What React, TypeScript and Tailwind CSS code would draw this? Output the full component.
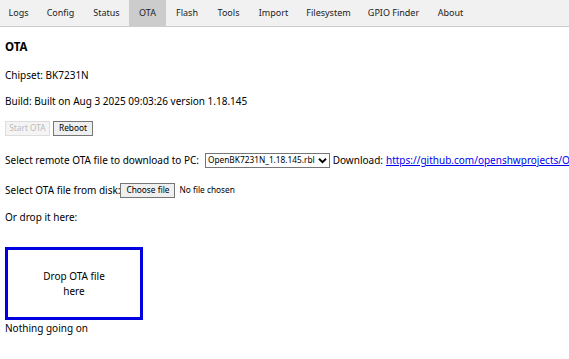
const tabs: [string, number][] = [
  ["Logs", 37],
  ["Config", 47],
  ["Status", 45],
  ["OTA", 37],
  ["Flash", 42],
  ["Tools", 41],
  ["Import", 49],
  ["Filesystem", 61],
  ["GPIO Finder", 69],
  ["About", 45],
];

function Chevron() {
  return (
    <svg width="9" height="7" viewBox="0 0 10 8" className="ml-[3px]">
      <path d="M1 2 L5 6 L9 2" fill="none" stroke="#000" strokeWidth="2.2" />
    </svg>
  );
}

export default function App() {
  return (
    <div className="h-[359px] w-[569px] overflow-hidden bg-white font-['Noto_Sans',sans-serif] text-[10px] text-black">
      <div className="flex h-[27px] border-b border-[#ccc] bg-[#f1f1f1]">
        {tabs.map(([label, w]) => (
          <div
            key={label}
            style={{ width: w }}
            className={
              "flex shrink-0 items-center justify-center text-[9px] text-[#222] " +
              (label === "OTA" ? "bg-[#ccc]" : "")
            }
          >
            {label}
          </div>
        ))}
      </div>

      <div className="px-[5px]">
        <h3 className="mt-[11px] text-[11.5px] font-bold leading-[18px]">OTA</h3>
        <p className="mt-[11px] leading-[16px]">Chipset: BK7231N</p>
        <p className="mt-[10px] leading-[16px]">Build: Built on Aug 3 2025 09:03:26 version 1.18.145</p>

        <div className="mt-[12px] flex gap-[3px]">
          <button className="h-[15px] w-[45px] border border-[#ddd] bg-[#f4f4f4] text-[8.3px] leading-none text-[#bbb]">
            Start OTA
          </button>
          <button className="h-[15px] w-[40px] border border-[#767676] bg-[#efefef] text-[8.3px] leading-none">
            Reboot
          </button>
        </div>

        <div className="mt-[16px] flex items-center whitespace-nowrap leading-[16px]">
          <span>Select remote OTA file to download to PC:</span>
          <span className="ml-[6px] flex h-[15px] w-[126px] items-center justify-between border border-[#767676] pl-[2px] pr-[2px] text-[8.3px] leading-none">
            OpenBK7231N_1.18.145.rbl
            <Chevron />
          </span>
          <span className="ml-[3px]">Download:</span>
          <a className="ml-[3px] text-[#0000ee] underline" href="#">
            https://github.com/openshwprojects/OpenBK7231T_App/releases/download/1.18.145/OpenBK7231N_1.18.145.rbl
          </a>
        </div>

        <div className="mt-[14px] flex items-center whitespace-nowrap leading-[16px]">
          <span>Select OTA file from disk:</span>
          <span className="flex h-[15px] w-[55px] items-center justify-center border border-[#767676] bg-[#efefef] text-[8.3px] leading-none">
            Choose file
          </span>
          <span className="ml-[4px] text-[8.3px]">No file chosen</span>
        </div>

        <p className="mt-[11px] leading-[16px]">Or drop it here:</p>

        <div className="mt-[22px] flex h-[73px] w-[138px] items-center justify-center border-[3px] border-[#0000e0] px-[30px] text-center leading-[15px]">
          Drop OTA file here
        </div>
        <p className="leading-[16px]">Nothing going on</p>
      </div>
    </div>
  );
}
